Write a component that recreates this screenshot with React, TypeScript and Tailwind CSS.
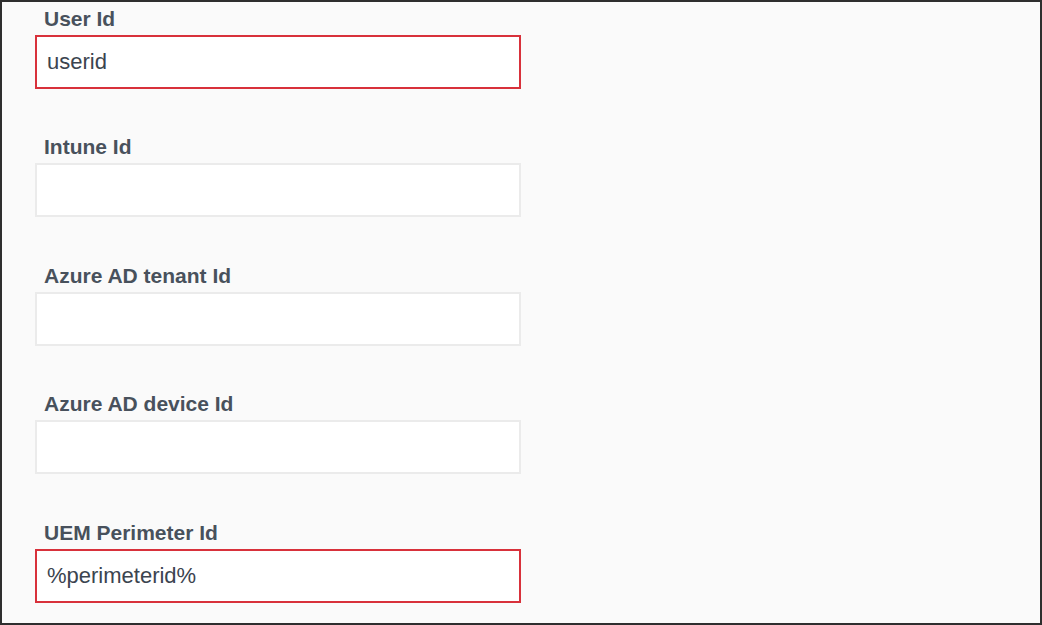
const fields = [
  { label: 'User Id', value: 'userid', error: true },
  { label: 'Intune Id', value: '', error: false },
  { label: 'Azure AD tenant Id', value: '', error: false },
  { label: 'Azure AD device Id', value: '', error: false },
  { label: 'UEM Perimeter Id', value: '%perimeterid%', error: true },
];

export default function App() {
  return (
    <div
      className="w-[1042px] h-[625px] bg-[#fafafa] border-2 border-[#2e2e2e] pl-[33px] pt-[4.5px] overflow-hidden"
      style={{ fontFamily: '"Liberation Sans", Arial, sans-serif' }}
    >
      <div className="flex flex-col gap-[46.5px] w-[486px]">
        {fields.map((f) => (
          <div key={f.label} className="flex flex-col">
            <label className="pl-[9px] text-[21px] leading-[24px] font-bold text-[#48515c] mb-1">
              {f.label}
            </label>
            <input
              readOnly
              value={f.value}
              className={`h-[54px] w-full bg-white border-2 px-[10px] text-[22px] text-[#3b444f] outline-none ${
                f.error ? 'border-[#d8313b]' : 'border-[#ebebeb]'
              }`}
            />
          </div>
        ))}
      </div>
    </div>
  );
}
